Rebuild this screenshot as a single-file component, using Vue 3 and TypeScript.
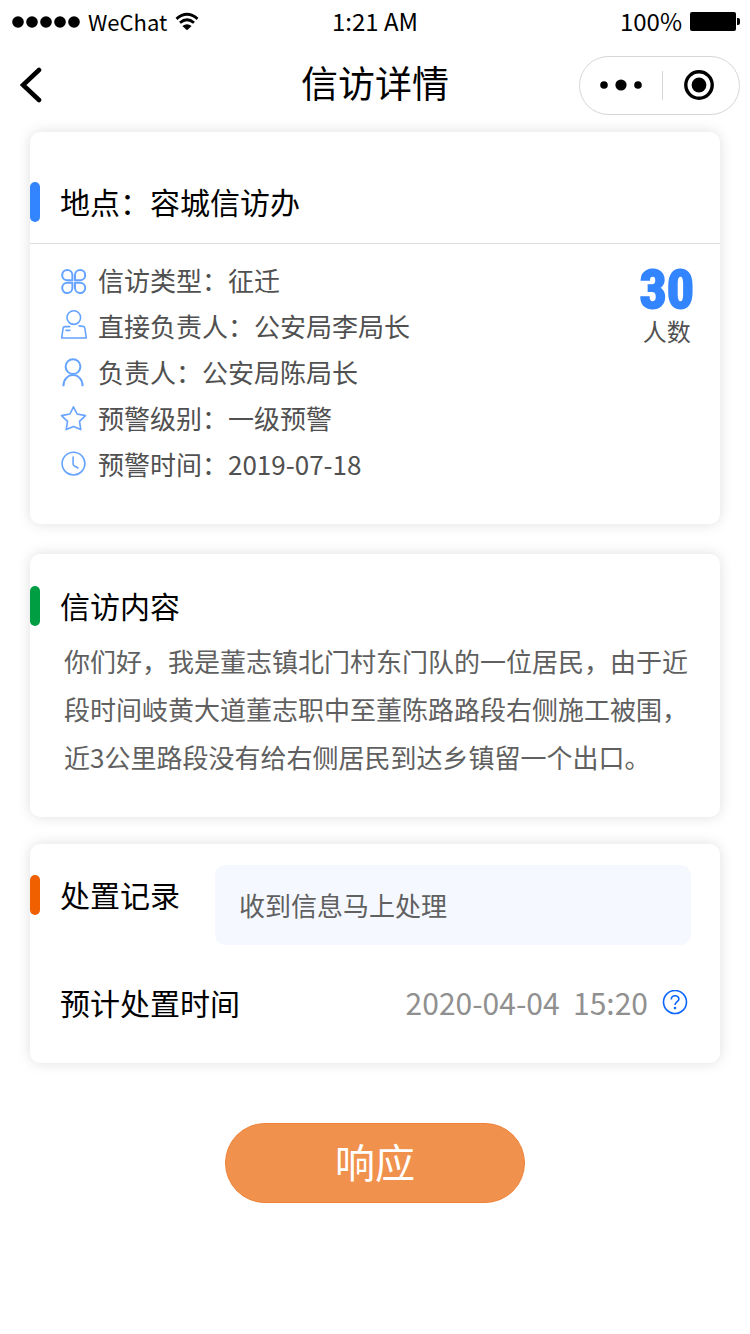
<script setup lang="ts">
import { ref } from 'vue'

type IconName = 'clover' | 'bust' | 'person' | 'star' | 'clock'

interface Fact {
  icon: IconName
  label: string
  value: string
}

const facts: Fact[] = [
  { icon: 'clover', label: '信访类型', value: '征迁' },
  { icon: 'bust', label: '直接负责人', value: '公安局李局长' },
  { icon: 'person', label: '负责人', value: '公安局陈局长' },
  { icon: 'star', label: '预警级别', value: '一级预警' },
  { icon: 'clock', label: '预警时间', value: '2019-07-18' },
]

const peopleCount = 30
const record = ref('收到信息马上处理')
const expectedTime = '2020-04-04  15:20'
const content =
  '你们好，我是董志镇北门村东门队的一位居民，由于近段时间岐黄大道董志职中至董陈路路段右侧施工被围，近3公里路段没有给右侧居民到达乡镇留一个出口。'
</script>

<template>
  <div class="page">
    <div class="status">
      <div class="status-left">
        <svg class="signal" viewBox="0 0 70 12" aria-hidden="true">
          <circle v-for="n in 5" :key="n" :cx="n * 14 - 6" cy="6" r="5.8" />
        </svg>
        <span class="carrier">WeChat</span>
        <svg class="wifi" viewBox="0 0 26 20" aria-hidden="true">
          <path d="M1.6 6.6Q13 -3.4 24.4 6.6" />
          <path d="M5.4 10.8Q13 4.4 20.6 10.8" />
          <path class="solid" d="M8 14.4Q13 10.4 18 14.4L13 19Z" />
        </svg>
      </div>
      <span>1:21 AM</span>
      <div class="status-right">
        <span>100%</span>
        <svg class="battery" viewBox="0 0 50 20" aria-hidden="true">
          <rect width="46" height="19" rx="2" />
          <path d="M47 6h1q2 0 2 2v3q0 2-2 2h-1z" />
        </svg>
      </div>
    </div>

    <header class="nav">
      <button class="back" type="button" aria-label="返回">
        <svg viewBox="0 0 22 36" aria-hidden="true"><path d="M19 3L3 18L19 33" /></svg>
      </button>
      <h1>信访详情</h1>
      <div class="capsule">
        <button class="more" type="button" aria-label="更多">
          <svg class="dots" viewBox="0 0 42 12" aria-hidden="true">
            <circle cx="4" cy="6" r="3.8" />
            <circle cx="21" cy="6" r="5.6" />
            <circle cx="38" cy="6" r="3.8" />
          </svg>
        </button>
        <span class="split"></span>
        <button class="close" type="button" aria-label="关闭">
          <svg class="target" viewBox="0 0 30 30" aria-hidden="true">
            <circle class="ring" cx="15" cy="15" r="13.2" />
            <circle cx="15" cy="15" r="7.4" />
          </svg>
        </button>
      </div>
    </header>

    <main>
      <section class="card">
        <h2 class="heading place blue">地点：容城信访办</h2>
        <div class="detail">
          <ul class="facts">
            <li v-for="fact in facts" :key="fact.label">
              <svg class="icon" viewBox="0 0 26 30" aria-hidden="true">
                <g v-if="fact.icon === 'clover'" class="bold">
                  <path d="M11.4 14.2H6.4A5.1 5.1 0 1 1 11.4 9Z" />
                  <path d="M14 14.2H19A5.1 5.1 0 1 0 14 9Z" />
                  <path d="M11.4 16.8H6.4A5.1 5.1 0 1 0 11.4 22Z" />
                  <path d="M14 16.8H19A5.1 5.1 0 1 1 14 22Z" />
                </g>
                <g v-else-if="fact.icon === 'bust'">
                  <circle cx="12.8" cy="5.6" r="6.8" />
                  <path d="M9.3 14.6H4Q2.4 14.6 2.1 16L.7 26H25.3L23.8 16Q23.6 14.5 22 14.4L17.4 13.8M4.4 18.4H9.4" />
                </g>
                <g v-else-if="fact.icon === 'person'" class="bold">
                  <circle cx="12" cy="8.6" r="7.4" />
                  <path d="M2.4 28.2C2.4 13.4 21.6 13.4 21.6 28.2" />
                </g>
                <path
                  v-else-if="fact.icon === 'star'"
                  d="M12.5 2.8L16.1 10L24.5 11.6L18.5 17.4L19.8 25.6L12.5 22.4L5.2 25.6L6.5 17.4L.5 11.6L8.9 10Z"
                />
                <g v-else>
                  <circle cx="12.5" cy="13.6" r="11.4" />
                  <path d="M12.1 6.4V14Q12.1 15.1 13.1 15.7L17.5 18.2" />
                </g>
              </svg>
              <span>{{ fact.label }}：{{ fact.value }}</span>
            </li>
          </ul>
          <div class="count">
            <strong>{{ peopleCount }}</strong>
            <span>人数</span>
          </div>
        </div>
      </section>

      <section class="card story">
        <h2 class="heading green">信访内容</h2>
        <p>{{ content }}</p>
      </section>

      <section class="card handling">
        <div class="record">
          <label class="heading orange" for="record">处置记录</label>
          <input id="record" v-model="record" type="text" />
        </div>
        <div class="expected">
          <h2 class="heading">预计处置时间</h2>
          <time datetime="2020-04-04T15:20">{{ expectedTime }}</time>
          <button class="help" type="button" aria-label="帮助">
            <svg viewBox="0 0 26 26" aria-hidden="true">
              <circle cx="13" cy="12" r="11.5" />
              <path d="M9.3 9.4C9.3 4.6 16.9 4.7 16.9 8.9C16.9 11.5 13 11.8 13 15" />
              <circle class="point" cx="13" cy="18" r="1.3" />
            </svg>
          </button>
        </div>
      </section>

      <button class="respond" type="button">响应</button>
    </main>
  </div>
</template>

<style>
body {
  margin: 0;
  background: #fff;
}
</style>

<style scoped>
.page {
  min-height: 100vh;
  font-family: 'Noto Sans CJK SC', sans-serif;
  color: #000;
}

h1,
h2,
p,
ul {
  margin: 0;
  padding: 0;
  font-weight: 400;
}

button {
  padding: 0;
  border: 0;
  background: none;
  font: inherit;
  color: inherit;
  cursor: pointer;
}

svg {
  display: block;
  flex: none;
}

.status {
  display: grid;
  grid-template-columns: 1fr auto 1fr;
  align-items: center;
  height: 44px;
  padding: 0 10px;
  font-size: 24px;
  line-height: 42px;
}

.status > span,
.status div > span {
  padding-bottom: 2px;
}

.status-left,
.status-right {
  display: flex;
  align-items: center;
  gap: 8px;
}

.status-right {
  justify-content: flex-end;
}

.carrier {
  font-size: 22px;
}

.signal {
  width: 70px;
  height: 12px;
}

.wifi {
  width: 24px;
  height: 20px;
  fill: none;
  stroke: #000;
  stroke-width: 3;
}

.wifi .solid {
  fill: #000;
  stroke: none;
}

.battery {
  width: 50px;
  height: 20px;
}

.nav {
  display: grid;
  grid-template-columns: 1fr auto 1fr;
  align-items: center;
  height: 82px;
  padding: 0 10px;
}

.back {
  justify-self: start;
  padding: 0 10px;
}

.back svg {
  width: 22px;
  height: 36px;
  fill: none;
  stroke: #000;
  stroke-width: 4.6;
  stroke-linecap: round;
}

h1 {
  padding-bottom: 6px;
  font-size: 37px;
  line-height: 50px;
}

.capsule {
  display: flex;
  align-items: center;
  justify-self: end;
  box-sizing: border-box;
  width: 161px;
  height: 59px;
  border: 1px solid #d6d6d6;
  border-radius: 30px;
}

.capsule button {
  display: flex;
  align-items: center;
  justify-content: center;
  height: 100%;
}

.more {
  width: 82px;
}

.close {
  flex: 1;
  padding-right: 4px;
}

.split {
  width: 1px;
  height: 29px;
  background: #d6d6d6;
}

.dots {
  width: 42px;
  height: 12px;
}

.target {
  width: 30px;
  height: 30px;
}

.target .ring {
  fill: none;
  stroke: #000;
  stroke-width: 3.4;
}

main {
  display: flex;
  flex-direction: column;
  padding: 6px 30px 40px;
}

.card {
  border-radius: 10px;
  background: #fff;
  box-shadow: 0 0 14px rgba(0, 0, 0, 0.13);
}

.heading {
  display: flex;
  align-items: flex-start;
  height: 40px;
  padding-left: 30px;
  font-size: 30px;
  line-height: 38px;
  white-space: nowrap;
}

.heading::before {
  width: 10px;
  height: 40px;
  margin-left: -30px;
  margin-right: 20px;
  border-radius: 5px;
  background: transparent;
  content: '';
}

.blue::before {
  background: #3385ff;
}

.green::before {
  background: #009e42;
}

.orange::before {
  background: #f06000;
}

.place {
  padding-top: 50px;
  padding-bottom: 21px;
  border-bottom: 1px solid #dedede;
}

.detail {
  display: flex;
  justify-content: space-between;
  padding: 13px 26px 37px 31px;
}

.facts {
  list-style: none;
  font-size: 26px;
  line-height: 46px;
  color: #505050;
}

.facts li {
  display: flex;
  align-items: center;
  gap: 11px;
}

.icon {
  width: 26px;
  height: 30px;
  margin-top: 2px;
  overflow: visible;
  fill: none;
  stroke: #66a3ff;
  stroke-width: 1.6;
  stroke-linejoin: round;
}

.icon .bold {
  stroke-width: 2;
}

.count {
  display: flex;
  flex-direction: column;
  align-items: center;
  padding-top: 6px;
  color: #505050;
}

.count strong {
  font-family: Impact, 'Roboto Condensed', 'Liberation Sans', sans-serif;
  font-size: 54px;
  line-height: 54px;
  color: #3385ff;
  -webkit-text-stroke: 2px #3385ff;
}

.count span {
  font-size: 24px;
  line-height: 28px;
}

.story {
  margin-top: 30px;
  padding: 32px 26px 36px 0;
}

.story p {
  padding: 11px 0 0 34px;
  font-size: 26px;
  line-height: 48px;
  color: #606060;
}

.handling {
  margin-top: 27px;
  padding: 21px 29px 40px 0;
}

.record {
  display: flex;
  align-items: flex-start;
  gap: 35px;
}

.record .heading {
  margin-top: 10px;
}

.record input {
  box-sizing: border-box;
  flex: 1;
  min-width: 0;
  height: 80px;
  padding: 0 24px 2px;
  border: 0;
  border-radius: 10px;
  background: #f5f9ff;
  font: inherit;
  font-size: 26px;
  color: #606060;
}

.expected {
  display: flex;
  align-items: center;
  margin-top: 38px;
}

.expected time {
  margin-left: auto;
  font-size: 30px;
  line-height: 38px;
  padding-bottom: 2px;
  white-space: pre;
  color: #909090;
}

.help {
  margin: 0 3px 0 14px;
}

.help svg {
  width: 26px;
  height: 26px;
  fill: none;
  stroke: #0a66ff;
  stroke-width: 1.6;
}

.help .point {
  fill: #0a66ff;
  stroke: none;
}

.respond {
  align-self: center;
  width: 300px;
  height: 80px;
  margin-top: 60px;
  padding-bottom: 4px;
  border: 1px solid #ef8237;
  border-radius: 40px;
  background: #f0914d;
  font-size: 40px;
  line-height: 74px;
  color: #fff;
}
</style>
